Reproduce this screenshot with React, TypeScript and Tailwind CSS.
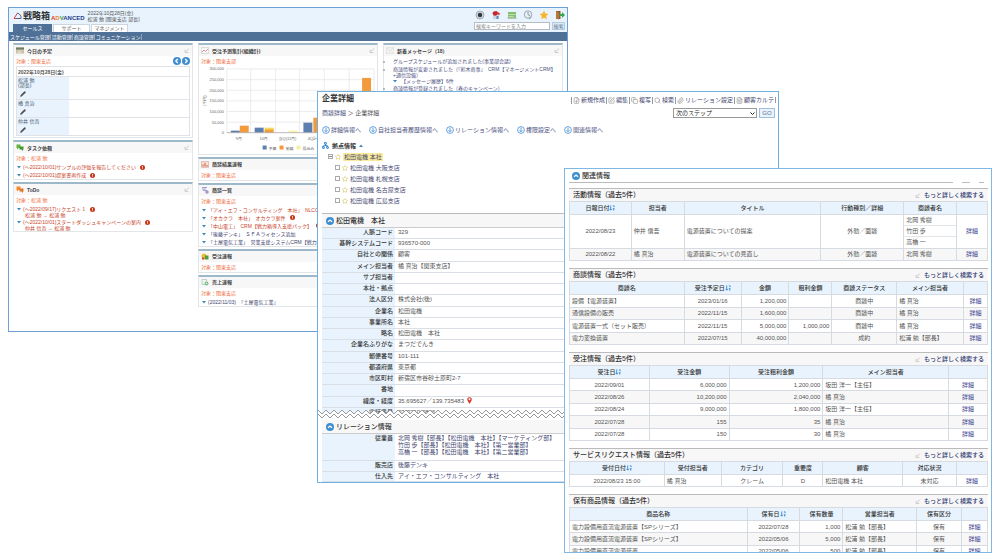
import { ReactNode } from "react";
import clsx from "clsx";
import { Copy, FilePlus, FileText, Network, Paperclip, Pencil, Search, SquarePen, Star } from "lucide-react";

const font = "font-['Liberation_Sans','Noto_Sans_CJK_JP',sans-serif]"

/* ---------- small drawings ---------- */

function EditMark() {
  return (
    <svg viewBox="0 0 8 8" className="h-[5px] w-[6px] shrink-0" fill="none" stroke="#999" strokeWidth=".8">
      <path d="M1 3v4h5M3 5l4-4" />
    </svg>
  )
}

function CircleArrow({ dir }: { dir: "left" | "right" | "up" }) {
  const d = {
    left: "M6 2.5 3.5 5 6 7.5",
    right: "M4 2.5 6.5 5 4 7.5",
    up: "M2.5 6 5 3.8 7.5 6",
  }[dir]
  return (
    <svg viewBox="0 0 10 10" className="h-[8px] w-[8px] shrink-0">
      <circle cx="5" cy="5" r="5" fill="#3f8ecf" />
      <path d={d} fill="none" stroke="#fff" strokeWidth="1.6" />
    </svg>
  )
}

function DownCircle() {
  return (
    <svg viewBox="0 0 16 16" className="h-[8px] w-[8px] shrink-0" fill="none" stroke="#3d8bd4" strokeWidth="1.6">
      <circle cx="8" cy="8" r="6.8" />
      <path d="M8 3.5v8M5 8.5l3 3 3-3" />
    </svg>
  )
}

function SortMark() {
  return (
    <svg viewBox="0 0 14 14" className="inline h-[6px] w-[6px] align-[-1px]" fill="none" stroke="#2f86cf" strokeWidth="2">
      <path d="M4 1v11M1 9l3 3 3-3M9 2h3v3M9 9h4M11 8v5" />
    </svg>
  )
}

function Alert() {
  return (
    <svg viewBox="0 0 10 10" className="ml-[2px] h-[5px] w-[5px] shrink-0">
      <circle cx="5" cy="5" r="5" fill="#c93416" />
      <path d="M5 2v3.6M5 6.8v1.4" stroke="#fff" strokeWidth="1.6" />
    </svg>
  )
}

function Triangle({ up }: { up?: boolean }) {
  return (
    <svg viewBox="0 0 8 8" className="h-[4px] w-[4px] shrink-0" fill="#3f87bd">
      <path d={up ? "M0 6h8L4 1z" : "M0 2h8L4 7z"} />
    </svg>
  )
}

function PanelIcon({ kind }: { kind: string }) {
  return (
    <svg viewBox="0 0 16 14" className="h-[7px] w-[8px] shrink-0">
      {kind === "calendar" && <><path d="M0 1h16v12H0z" fill="#c9bfa4" /><path d="M0 1h16v4H0z" fill="#6d7d65" /><path d="M3 8h10M3 11h7" stroke="#fff" /></>}
      {kind === "chart" && <><path d="M.5 1.5h15v11H.5z" fill="#fff" stroke="#aaa" /><path d="m2 10 4-4 3 3 5-5" fill="none" stroke="#cc6a7e" strokeWidth="1.5" /></>}
      {kind === "task" && <><path d="M1 1h8v7H5l-3 3V8H1z" fill="#62b53c" /><path d="M7 5h8v6h-1v3l-3-3H7z" fill="#3f9a2a" /></>}
      {kind === "todo" && <><path d="M1 1h8v7H5l-3 3V8H1z" fill="#f58b2c" /><path d="M7 5h8v6h-1v3l-3-3H7z" fill="#e07a24" /></>}
      {kind === "result" && <><path d="M.5 1.5h15v11H.5z" fill="#fbe7dc" stroke="#b77" /><path d="M3 11V7h2v4zM7 11V4h2v7zM11 11V8h2v3z" fill="#d4502a" /></>}
      {kind === "deal" && <><path d="M2 1h10M2 4h8M4 7h8" stroke="#8d87c9" strokeWidth="1.6" /><circle cx="12" cy="10" r="3.4" fill="#a693cf" /></>}
      {kind === "order" && <><circle cx="6" cy="6" r="5" fill="#e8bb3b" /><path d="M8 5h7v8H8z" fill="#49a13c" /><path d="M2 9h5v4H2z" fill="#cf4a2e" /></>}
      {kind === "sales" && <><path d="M2 1h9v10H2z" fill="#eef6ee" stroke="#8aa" /><circle cx="11" cy="9" r="4" fill="#79b98a" /><path d="M9 9h4M11 7v4" stroke="#fff" /></>}
      {kind === "mail" && <><path d="M.5 1.5h15v11H.5z" fill="#f4f4f4" stroke="#ccc" /><path d="m1 2 7 6 7-6" fill="none" stroke="#ccc" /></>}
    </svg>
  )
}

function HeaderIcons() {
  return (
    <div className="flex gap-[6px]">
      <svg viewBox="0 0 20 20" className="h-[10px] w-[10px]">
        <circle cx="10" cy="10" r="8" fill="#d5dade" stroke="#a3acb3" strokeWidth="2" />
        <circle cx="10" cy="10" r="4.5" fill="#2f3b45" />
      </svg>
      <svg viewBox="0 0 20 20" className="h-[10px] w-[10px]">
        <path d="M2 6 11 2l8 6-5 3z" fill="#d83a3a" />
        <path d="M4 9h11v9H4z" fill="#c9d6e2" />
        <circle cx="8" cy="7" r="4.5" fill="#c42430" />
        <path d="M11 12h4v6h-4z" fill="#5d86b3" />
      </svg>
      <svg viewBox="0 0 20 20" className="h-[10px] w-[10px]">
        <path d="M2 4h16v12H2z" fill="#86bf74" />
        <path d="M3 9h14M3 13h10" stroke="#b9deaa" strokeWidth="2" />
        <path d="M1 15h18v3H1z" fill="#b6c6b0" />
      </svg>
      <svg viewBox="0 0 20 20" className="h-[10px] w-[10px]">
        <circle cx="10" cy="9" r="7.5" fill="#e9eef3" stroke="#9aa9b8" strokeWidth="2" />
        <path d="M10 4v5l4 3M12 18l5-4" stroke="#8094a8" strokeWidth="2" fill="none" />
      </svg>
      <svg viewBox="0 0 20 20" className="h-[10px] w-[10px]">
        <path d="m10 1 2.8 6 6.2.8-4.600 4.300 1.200 6.400L10 15.300 4.400 18.500l1.200-6.400L1 7.800 7.200 7z" fill="#f8b62d" />
      </svg>
      <svg viewBox="0 0 20 20" className="h-[10px] w-[10px]">
        <path d="M2 2h9v16H2z" fill="#8a5a35" />
        <path d="M2 2l6 3v14l-6-2z" fill="#b9773f" />
        <path d="M9 8h5V4l6 6-6 6v-4H9z" fill="#35a84a" />
      </svg>
    </div>
  )
}

/* ---------- dashboard window ---------- */

function Panel({ icon, title, target, children }: { icon: string; title: string; target?: string; children?: ReactNode }) {
  return (
    <section className="border border-t-2 border-[#e3e6e9] border-t-[#9db8c8] bg-white">
      <h2 className="flex h-[11px] items-center gap-[3px] bg-[#f7f7f7] px-[2px] font-bold text-[#444]">
        <PanelIcon kind={icon} />
        <span className="grow">{title}</span>
        <EditMark />
      </h2>
      {target && <p className="h-[10px] px-[2px] leading-[10px] text-[#f0703f]">対象：{target}</p>}
      {children}
    </section>
  )
}

type ItemProps = { text: string; sub?: string; alert?: boolean; red?: boolean }

function Item({ text, sub, alert, red }: ItemProps) {
  return (
    <li className={clsx("overflow-hidden pl-[3px] whitespace-nowrap", red ? "text-[#c8442a]" : "text-[#3f4670]")}>
      <a href="#" className="flex h-[8px] items-center gap-[2px]">
        <Triangle />
        {text}
        {alert && <Alert />}
      </a>
      {sub && <span className="block pl-[8px] leading-[5px]">{sub}</span>}
    </li>
  )
}

const yLabels = ["300,000", "250,000", "200,000", "150,000", "100,000", "50,000", "0"]
const gridX = [28, 52, 77, 101, 126, 151, 176]
const bars = [
  { x: 32, y: 63, color: "#5b7fae" },
  { x: 41, y: 58, color: "#f39a3d" },
  { x: 56, y: 60, color: "#5b7fae" },
  { x: 66, y: 60, color: "#f5d95a" },
  { x: 66, y: 62, color: "#f39a3d" },
  { x: 90, y: 63, color: "#f4f1a4" },
  { x: 105, y: 55, color: "#5b7fae" },
  { x: 115, y: 50, color: "#f39a3d" },
  { x: 164, y: 10, color: "#f39a3d" },
]

function ForecastChart() {
  return (
    <svg viewBox="0 -2 179 88" className="w-full" fontSize="4" fill="#666">
      {yLabels.map((label, i) => {
        const y = 1 + i * 10.7
        return (
          <g key={label}>
            <path d={`M28 ${y}H176`} stroke="#e4e4e4" strokeWidth=".7" />
            <text x="25" y={y + 1.5} textAnchor="end">{label}</text>
          </g>
        )
      })}
      {gridX.map(x => <path key={x} d={`M${x} 1V65`} stroke="#e4e4e4" strokeWidth=".7" />)}
      {bars.map(({ x, y, color }, i) => <rect key={i} x={x} y={y} width="9" height={65 - y} fill={color} />)}
      <path d="M28 65H176" stroke="#aaa" strokeWidth=".7" />
      <text x="40" y="72" textAnchor="middle">9月</text>
      <text x="65" y="72" textAnchor="middle">10月</text>
      <text x="89" y="72" textAnchor="middle">当Q(11月)</text>
      <text x="114" y="72" textAnchor="middle">4Q計</text>
      <text transform="translate(7 33) rotate(-90)" textAnchor="middle">(千円)</text>
      <rect x="64" y="78" width="4" height="4" fill="#5b7fae" />
      <text x="70" y="82">予算</text>
      <rect x="81" y="78" width="4" height="4" fill="#f39a3d" />
      <text x="87" y="82">実績</text>
      <rect x="98" y="78" width="4" height="4" fill="#f4f1a4" />
      <text x="104" y="82">見込み</text>
    </svg>
  )
}

function Dashboard() {
  return (
    <div className="absolute top-[7px] left-[0.8%] w-[56%] border border-[#6f9fd6] bg-white pb-[24px] text-[5px] leading-[6px] text-[#555]">
      <header className="flex h-[24px] justify-between bg-[#e8f3fe] pr-[2px] pl-1">
        <div className="flex flex-col justify-between">
          <div className="flex items-center gap-px pt-[2px]">
            <svg viewBox="0 0 18 18" className="h-[9px] w-[9px]" fill="none" strokeWidth="2">
              <path d="M9 2 2 13h7" stroke="#d5433b" />
              <path d="M9 2c5 2 8 6 7 11H7" stroke="#4a5f9c" />
            </svg>
            <span className="text-[9px] leading-[12px] font-bold text-[#333]">戦略箱</span>
            <span className="pt-[3px] text-[6px] font-bold text-[#27408b]">
              <span className="text-[#e0392b]">A</span><span className="text-[#ee8322]">D</span><span className="text-[#3c9a45]">V</span>ANCED
            </span>
            <div className="ml-[2px]">
              <p>2022年10月28日(金)</p>
              <p>松浦 勉 [関東支店 部長]</p>
            </div>
          </div>
          <div className="flex gap-px text-center leading-[8px]">
            <button className="w-[39px] bg-[#4f7197] text-white">セールス</button>
            <button className="w-[37px] border border-b-0 border-[#cdd6de] bg-white leading-[7px]">サポート</button>
            <button className="w-[37px] border border-b-0 border-[#cdd6de] bg-white leading-[7px]">マネジメント</button>
          </div>
        </div>
        <div className="flex flex-col items-end gap-[2px] pt-[2px]">
          <HeaderIcons />
          <div className="flex gap-[2px]">
            <input type="text" aria-label="検索キーワード" placeholder="検索キーワードを入力" className="h-[8px] w-[76px] border border-[#b5bcc4] bg-white px-px placeholder:text-[#888]" />
            <button className="h-[8px] w-[13px] border border-[#b8cbdc] bg-[#dcebf8] leading-[6px] text-[#5c7690]">検索</button>
          </div>
        </div>
      </header>
      <nav className="flex h-[9px] items-center bg-[#4f7197] text-white">
        <a href="#" className="border-r border-[#8ba3bd] pl-px">スケジュール管理</a>
        <a href="#" className="border-r border-[#8ba3bd] pl-px">活動管理</a>
        <a href="#" className="border-r border-[#8ba3bd] pl-px">商談管理</a>
        <a href="#" className="border-r border-[#8ba3bd] pl-px">コミュニケーション</a>
      </nav>

      <div className="grid grid-cols-3 gap-[5px] px-1 pt-[2px]">
        <div className="flex flex-col gap-[2px]">
          <Panel icon="calendar" title="今日の予定">
            <div className="flex h-[10px] items-center gap-px px-[2px]">
              <p className="grow text-[#f0703f]">対象：関東支店</p>
              <button aria-label="前日"><CircleArrow dir="left" /></button>
              <button aria-label="翌日"><CircleArrow dir="right" /></button>
            </div>
            <table className="mx-[2px] mb-px w-[98%] border border-[#dfe3e7]">
              <thead>
                <tr className="h-[10px] border-b border-[#dfe3e7]"><th colSpan={2} className="px-px text-left">2022年10月28日(金)</th></tr>
              </thead>
              <tbody>
                {["松浦 勉\n(部長)", "橘 真治", "仲井 信吾"].map((name, i) => (
                  <tr key={name} className={clsx("border-b border-[#dfe3e7]", i === 0 ? "h-[23px]" : "h-[18px]")}>
                    <td className="w-[52px] bg-[#e8f3fe] px-px pt-px align-top leading-[5px] whitespace-pre-line text-[#4c5d73]">
                      {name}
                      <Pencil className="mt-[3px] ml-[2px] h-[6px] w-[6px] fill-[#555]" color="#555" />
                    </td>
                    <td></td>
                  </tr>
                ))}
              </tbody>
            </table>
          </Panel>
          <Panel icon="task" title="タスク依頼" target="松浦 勉">
            <ul>
              <Item red alert text="(～2022/10/01)サンプルの評価を報告してください" />
              <Item red alert text="(～2022/10/01)提案書再作成" />
            </ul>
          </Panel>
          <Panel icon="todo" title="ToDo" target="松浦 勉">
            <ul>
              <Item red alert text="(～2022/09/17)リクエスト１" sub="松浦 勉 → 松浦 勉" />
              <Item red alert text="(～2022/10/01)スタートダッシュキャンペーンの案内" sub="仲井 信吾 → 松浦 勉" />
            </ul>
          </Panel>
        </div>

        <div className="flex min-w-0 flex-col gap-[2px]">
          <Panel icon="chart" title="受注予測集計(組織計)" target="関東支部">
            <ForecastChart />
          </Panel>
          <Panel icon="result" title="商談結果速報" target="関東支店" />
          <Panel icon="deal" title="商談一覧" target="関東支店">
            <ul>
              <Item red text="「アイ・エフ・コンサルティング　本社」　NLCOタイプ" />
              <Item red alert text="「オカクラ　本社」　オカクラ案件" />
              <Item red alert text="「中山電工」　CRM【戦力箱導入支援パック】" />
              <Item text="「後藤デンキ」　ＳＦＡライセンス追加" />
              <Item text="「土屋電気工業」　営業支援システムCRM【戦力箱】" />
            </ul>
          </Panel>
          <Panel icon="order" title="受注速報" target="関東支店" />
          <Panel icon="sales" title="売上速報" target="関東支店">
            <ul><Item text="(2022/11/03)　「土屋電気工業」" /></ul>
          </Panel>
        </div>

        <Panel icon="mail" title="新着メッセージ（18）">
          <ul className="list-disc pt-[2px] pl-[9px] text-[#4c5280] marker:text-[#9ab]">
            <li className="h-[8px]"><a href="#">グループスケジュールが追加されました(事業部会議)</a></li>
            <li>
              <a href="#">商談情報が変更されました（「鈴木商事」　CRM【マネージメントCRM】<br />+通信設備）</a>
              <a href="#" className="flex items-center gap-1"><Triangle />【メッセージ履歴】6件</a>
            </li>
            <li className="pt-px"><a href="#">商談情報が登録されました（春のキャンペーン）</a></li>
          </ul>
        </Panel>
      </div>
    </div>
  )
}

/* ---------- company detail window ---------- */

const tools = [
  { icon: FilePlus, label: "新規作成" },
  { icon: SquarePen, label: "編集" },
  { icon: Copy, label: "複写" },
  { icon: Search, label: "検索" },
  { icon: Paperclip, label: "リレーション設定" },
  { icon: FileText, label: "顧客カルテ" },
]

const anchors = ["詳細情報へ", "自社担当者履歴情報へ", "リレーション情報へ", "権限設定へ", "関連情報へ"]

const branches = ["大阪支店", "札幌支店", "名古屋支店", "広島支店"]

const company = [
  ["人脈コード", "329"],
  ["基幹システムコード", "936570-000"],
  ["自社との関係", "顧客"],
  ["メイン担当者", "橘 真治【関東支店】"],
  ["サブ担当者", ""],
  ["本社・拠点", ""],
  ["法人区分", "株式会社(後)"],
  ["企業名", "松田電機"],
  ["事業所名", "本社"],
  ["略名", "松田電機　本社"],
  ["企業名ふりがな", "まつだでんき"],
  ["郵便番号", "101-111"],
  ["都道府県", "東京都"],
  ["市区町村", "新宿区市谷砂土原町2-7"],
  ["番地", ""],
  ["緯度・経度", "35.695627／139.735483"],
]

function SectionTitle({ children }: { children: ReactNode }) {
  return (
    <h2 className="flex h-[14px] items-center gap-[2px] border-b border-[#ccc] bg-[#f7f7f7] pl-1 text-[7px] font-medium text-[#333]">
      <CircleArrow dir="up" />
      {children}
    </h2>
  )
}

function Field({ label, children }: { label: string; children?: ReactNode }) {
  return (
    <tr className="border-b border-[#d9dfe5]">
      <th className="w-[16%] bg-[#e8f3fe] pr-[2px] text-right align-top font-medium text-[#333]">{label}</th>
      <td className="pl-[3px] align-top">{children}</td>
    </tr>
  )
}

function ZigZag() {
  const line = (y: number) => "M0 " + y + Array.from({ length: 120 }, (_, i) => `L${(i + 1) * 4} ${i % 2 ? y : y + 4}`).join("")
  return (
    <svg viewBox="0 0 462 12" preserveAspectRatio="xMinYMid slice" className="relative -mt-[4px] h-[12px] w-full" fill="none" stroke="#999" strokeWidth="1">
      <path d={line(2) + "V12H0z"} fill="#fff" stroke="none" />
      <path d={line(2)} />
      <path d={line(6)} />
    </svg>
  )
}

function CompanyDetail() {
  return (
    <div className="absolute top-[91px] left-[31.7%] w-[46.2%] border border-[#6fb0e3] bg-white text-[6px] leading-[8px] text-[#555]">
      <header className="flex h-[14px] items-center justify-between pr-[2px] pl-1">
        <h1 className="text-[8px] font-bold text-[#333]">企業詳細</h1>
        <div className="flex items-center gap-px pt-[2px] text-[#3f4670]">
          {tools.map(({ icon: Icon, label }) => (
            <a key={label} href="#" className="flex items-center gap-px border-l border-[#999] pl-px leading-[6px]">
              <Icon className="h-[7px] w-[7px]" color="#888" />
              {label}
            </a>
          ))}
          <span className="h-[6px] border-l border-[#999]" />
        </div>
      </header>
      <div className="flex h-[13px] items-center justify-between pr-[3px] pl-1">
        <p><a href="#" className="text-[#4c5280]">商談詳細</a> ＞ 企業詳細</p>
        <form className="flex gap-[2px]">
          <div className="relative">
            <select aria-label="次のステップ" className="block h-[10px] w-[84px] appearance-none border border-[#999] bg-white px-[2px] leading-[8px] text-[#222]">
              <option>次のステップ</option>
            </select>
            <svg viewBox="0 0 10 10" className="pointer-events-none absolute top-[3px] right-[2px] h-[5px] w-[5px]" fill="none" stroke="#222" strokeWidth="2">
              <path d="m1 3 4 4 4-4" />
            </svg>
          </div>
          <button type="button" className="h-[10px] w-[16px] border border-[#9fc0dd] bg-[#e8f3fe] leading-[8px] text-[#5c7690]">GO</button>
        </form>
      </div>
      <nav className="flex h-[21px] items-center gap-[8px] pl-1 text-[#4c5280]">
        {anchors.map(label => <a key={label} href="#" className="flex items-center gap-px"><DownCircle />{label}</a>)}
      </nav>
      <h2 className="flex h-[11px] items-center gap-[3px] pl-1 font-bold text-[#333]">
        <Network className="h-[7px] w-[7px]" color="#2f86cf" strokeWidth={3} />
        拠点情報
        <Triangle up />
      </h2>
      <ul className="pl-[10px] text-[#3f4670]">
        <li className="flex h-[11px] items-center gap-[2px]">
          <button aria-label="閉じる" className="flex h-[5px] w-[5px] items-center border border-[#aaa]"><span className="h-px w-full bg-[#888]" /></button>
          <Star className="h-[6px] w-[6px]" color="#d9b43a" />
          <a href="#" className="bg-[#fbeb9b] px-px">松田電機 本社</a>
        </li>
        {branches.map(name => (
          <li key={name} className="flex h-[11px] items-center gap-[2px] pl-[7px]">
            <span className="h-[5px] w-[5px] border border-[#aaa]" />
            <Star className="h-[6px] w-[6px]" color="#c9b93a" />
            <a href="#">松田電機 {name}</a>
          </li>
        ))}
      </ul>

      <div className="mt-[7px] ml-1 border-t border-[#bbb]">
        <SectionTitle>松田電機　本社</SectionTitle>
        <table className="h-[180px] w-full">
          <tbody>
            {company.map(([label, value]) => (
              <Field key={label} label={label}>
                {value}
                {label === "緯度・経度" && (
                  <svg viewBox="0 0 10 14" className="ml-[3px] inline h-[7px] w-[5px] align-[-1px]">
                    <path d="M5 14 1 7a4.500 4.500 0 1 1 8 0z" fill="#d9342b" />
                    <circle cx="5" cy="4.500" r="2" fill="#fff" />
                  </svg>
                )}
              </Field>
            ))}
          </tbody>
        </table>
        <div className="flex h-[4px]">
          <span className="h-[8px] w-[16%] bg-[#e8f3fe] pr-[2px] text-right text-[#333]">電話番号</span>
          <span className="pl-[3px]">03-3260-0836</span>
        </div>
      </div>
      <ZigZag />
      <div className="ml-1">
        <SectionTitle>リレーション情報</SectionTitle>
        <table className="h-[48px] w-full">
          <tbody className="text-[#3f4670]">
            <Field label="従業員">
              <ul className="py-px leading-[7px]">
                <li><a href="#">北岡 秀樹【部長】【松田電機　本社】【マーケティング部】</a></li>
                <li><a href="#">竹田 歩【部長】【松田電機　本社】【第一営業部】</a></li>
                <li><a href="#">高橋 一【部長】【松田電機　本社】【第二営業部】</a></li>
              </ul>
            </Field>
            <Field label="販売店">後藤デンキ</Field>
            <Field label="仕入先">アイ・エフ・コンサルティング　本社</Field>
          </tbody>
        </table>
      </div>
    </div>
  )
}

/* ---------- related information window ---------- */

type Align = "l" | "c" | "r"
type Column = { label: string; width: number; align: Align; sort?: boolean }

const col = (label: string, width: number, align: Align = "c", sort = false): Column => ({ label, width, align, sort })

type RelatedProps = { title: string; className: string; columns: Column[]; rows: (string | string[])[][] }

function Related({ title, className, columns, rows }: RelatedProps) {
  const total = columns.reduce((sum, { width }) => sum + width, 0)
  return (
    <section className="mb-[7px]">
      <header className="flex h-[13px] items-center justify-between border-t border-[#bbb] bg-[#f7f7f7] pr-[4px] pl-1">
        <h2 className="text-[7px] font-medium text-[#333]">{title}（過去5件）</h2>
        <a href="#" className="flex items-center gap-[3px] font-medium text-[#2d3570]"><EditMark />もっと詳しく検索する</a>
      </header>
      <table className={clsx("w-full table-fixed border border-[#d5dbe1]", className)}>
        <colgroup>
          {columns.map(({ width }, i) => <col key={i} style={{ width: `${(width / total) * 100}%` }} />)}
        </colgroup>
        <thead>
          <tr className="h-[13px] bg-[#e8f3fe]">
            {columns.map(({ label, sort }, i) => (
              <th key={i} className="border border-[#d5dbe1] font-medium text-[#333]">{label}{sort && <SortMark />}</th>
            ))}
          </tr>
        </thead>
        <tbody>
          {rows.map((cells, i) => (
            <tr key={i} className="h-[12px] even:bg-[#f7f7f7]">
              {cells.map((cell, j) => (
                <td
                  key={j}
                  className={clsx(
                    "border border-[#d5dbe1] whitespace-nowrap",
                    !Array.isArray(cell) && "px-[2px]",
                    columns[j].align === "c" && "text-center",
                    columns[j].align === "r" && "text-right"
                  )}
                >
                  {Array.isArray(cell)
                    ? <ul className="divide-y divide-[#e3e6e9]">{cell.map(name => <li key={name} className="px-[2px] leading-[10px]">{name}</li>)}</ul>
                    : cell === "詳細" ? <a href="#" className="text-[#3b4390]">{cell}</a> : cell}
                </td>
              ))}
            </tr>
          ))}
        </tbody>
      </table>
    </section>
  )
}

function RelatedInfo() {
  return (
    <div className="absolute top-[30%] bottom-[7px] left-[56.4%] w-[42.8%] overflow-hidden border border-[#7fb8e4] bg-white pr-[3px] pl-1 text-[6px] leading-[8px] text-[#555]">
      <h1 className="flex h-[13px] items-center gap-[2px] pt-px pl-[3px] text-[7px] font-medium text-[#333]"><CircleArrow dir="up" />関連情報</h1>
      <div className="mb-[5px] flex gap-[9px] pr-[4px]">
        <span className="h-px grow bg-[#bbb]" />
        <span className="h-px w-[8px] bg-[#bbb]" />
        <span className="h-px w-[5px] bg-[#bbb]" />
      </div>
      <Related
        title="活動情報"
        className="h-[60px]"
        columns={[col("日報日付", 62, "c", true), col("担当者", 53, "l"), col("タイトル", 137, "l"), col("行動種別／詳細", 83), col("商談者名", 53, "l"), col("", 31)]}
        rows={[
          ["2022/08/23", "仲井 信吾", "電源装置についての提案", "外勤／面談", ["北岡 秀樹", "竹田 歩", "高橋 一"], "詳細"],
          ["2022/08/22", "橘 真治", "電源装置についての見直し", "外勤／面談", "北岡 秀樹", "詳細"],
        ]}
      />
      <Related
        title="商談情報"
        className="h-[64px]"
        columns={[col("商談名", 115, "l"), col("受注予定日", 57, "c", true), col("金額", 48, "r"), col("粗利金額", 43, "r"), col("商談ステータス", 65), col("メイン担当者", 67, "l"), col("", 24)]}
        rows={[
          ["設備【電源装置】", "2023/01/16", "1,200,000", "", "商談中", "橘 真治", "詳細"],
          ["通信設備の販売", "2022/11/15", "1,600,000", "", "商談中", "橘 真治", "詳細"],
          ["電源装置一式（セット販売）", "2022/11/15", "5,000,000", "1,000,000", "商談中", "橘 真治", "詳細"],
          ["電力変換装置", "2022/07/15", "40,000,000", "", "成約", "松浦 勉【部長】", "詳細"],
        ]}
      />
      <Related
        title="受注情報"
        className="h-[76px]"
        columns={[col("受注日", 80, "c", true), col("受注金額", 80, "r"), col("受注粗利金額", 94, "r"), col("メイン担当者", 126, "l"), col("", 39)]}
        rows={[
          ["2022/09/01", "6,000,000", "1,200,000", "坂田 洋一【主任】", "詳細"],
          ["2022/08/26", "10,200,000", "2,040,000", "橘 真治", "詳細"],
          ["2022/08/24", "9,000,000", "1,800,000", "坂田 洋一【主任】", "詳細"],
          ["2022/07/28", "155", "35", "橘 真治", "詳細"],
          ["2022/07/28", "150", "30", "橘 真治", "詳細"],
        ]}
      />
      <Related
        title="サービスリクエスト情報"
        className="h-[26px]"
        columns={[col("受付日付", 95, "c", true), col("受付担当者", 57, "l"), col("カテゴリ", 62), col("重要度", 40), col("顧客", 80, "l"), col("対応状況", 54), col("", 31)]}
        rows={[["2022/08/23 15:00", "橘 真治", "クレーム", "D", "松田電機 本社", "未対応", "詳細"]]}
      />
      <Related
        title="保有商品情報"
        className="h-[51px]"
        columns={[col("商品名称", 178, "l"), col("保有日", 53, "c", true), col("保有数量", 43, "r"), col("営業担当者", 74, "l"), col("保有区分", 45), col("", 26)]}
        rows={[
          ["電力設備用直流電源装置【SPシリーズ】", "2022/07/28", "1,000", "松浦 勉【部長】", "保有", "詳細"],
          ["電力設備用直流電源装置【SPシリーズ】", "2022/05/06", "5,000", "松浦 勉【部長】", "保有", "詳細"],
          ["電力設備用直流電源装置", "2022/05/06", "500", "松浦 勉【部長】", "保有", "詳細"],
        ]}
      />
    </div>
  )
}

export default function App() {
  return (
    <main className={clsx("relative h-screen min-h-[560px] overflow-hidden bg-white", font)}>
      <Dashboard />
      <CompanyDetail />
      <RelatedInfo />
    </main>
  )
}
